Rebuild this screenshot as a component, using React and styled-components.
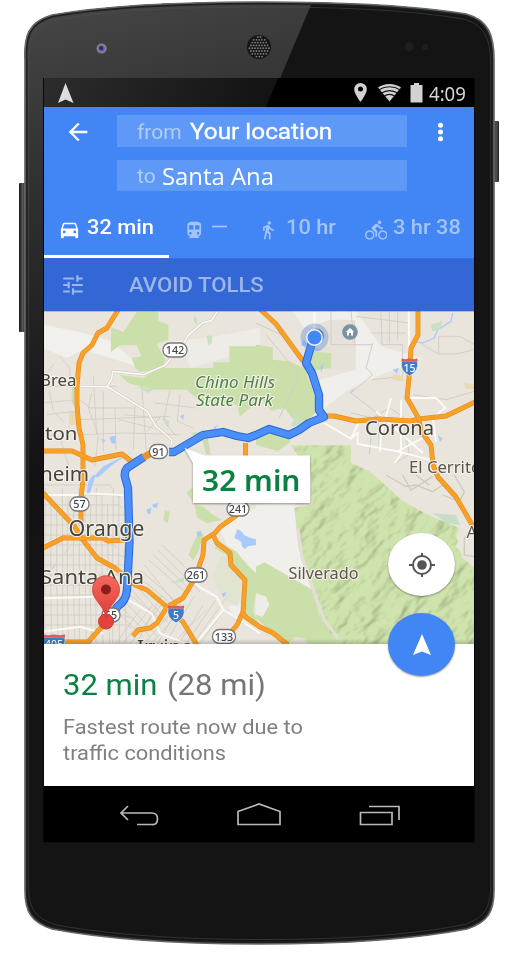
import React from "react";
import styled, { createGlobalStyle } from "styled-components";
import {
  MdArrowBack,
  MdDirectionsBike,
  MdDirectionsCar,
  MdDirectionsTransit,
  MdDirectionsWalk,
  MdTune,
} from "react-icons/md";

const GlobalStyle = createGlobalStyle`
  * { box-sizing: border-box; }
  body { margin: 0; background: #fff; font-family: Roboto, sans-serif; }
  #root svg { display: block; flex: none; }
`;

const Device = styled.main`
  position: relative;
  width: 513px;
  height: 963px;
  padding: 78px 39px 121px 44px;
  overflow: hidden;
`;

const Shell = styled.svg`
  position: absolute;
  inset: 0;
`;

const Screen = styled.div`
  position: relative;
  display: flex;
  flex-direction: column;
  width: 430px;
  height: 764px;
  background: #fff;
  overflow: hidden;
`;

const StatusBar = styled.div`
  display: flex;
  align-items: center;
  flex: none;
  height: 29px;
  padding: 0 8px 0 14px;
  color: #d6d6d6;
  background: linear-gradient(113deg, #2c2c2c 0%, #131313 52.8%, #000 53.1%);
`;

const StatusIcons = styled.div`
  display: flex;
  align-items: center;
  margin-left: auto;
`;

const Clock = styled.span`
  width: 37px;
  margin-left: 6px;
  font: 400 20px/29px "Noto Sans", sans-serif;
  transform: scaleX(0.93);
  transform-origin: left;
  padding-top: 1px;
  white-space: nowrap;
`;

const Header = styled.header`
  display: grid;
  grid-template-columns: 73px 290px 1fr;
  grid-template-rows: 32px 31px;
  row-gap: 13px;
  flex: none;
  height: 95px;
  padding-top: 8px;
  background: #4285f5;
`;

const HeaderButton = styled.button`
  display: flex;
  align-items: center;
  padding: 2px 0 0 ${(p) => p.$inset}px;
  border: 0;
  background: none;
  color: #fff;
`;

const Field = styled.div`
  grid-column: 2;
  display: flex;
  align-items: center;
  padding-left: 20px;
  background: #5f99f7;
`;

const Stretch = styled.span`
  display: inline-block;
  flex: none;
  white-space: nowrap;
  transform: scaleX(${(p) => p.$x || 1});
  transform-origin: left;
`;

const FieldLabel = styled(Stretch)`
  width: ${(p) => p.$w}px;
  color: #b0ccfb;
  font-size: 20px;
  line-height: 31px;
  padding-top: 2px;
`;

const FieldValue = styled(Stretch)`
  color: #fff;
  font: ${(p) => (p.$open ? '400 24px/31px "Open Sans"' : "400 22px/31px Roboto")}, sans-serif;
  padding-top: ${(p) => (p.$open ? 0 : 1)}px;
  -webkit-text-stroke: ${(p) => (p.$open ? 0 : 0.3)}px #fff;
`;

const Tabs = styled.nav`
  display: flex;
  flex: none;
  height: 56px;
  background: #4285f5;
`;

const Tab = styled.div`
  display: flex;
  align-items: flex-start;
  flex: none;
  width: ${(p) => p.$w}px;
  padding: 13px 0 0 ${(p) => p.$inset}px;
  color: ${(p) => (p.$active ? "#fff" : "#a3c3fb")};
  border-bottom: ${(p) => (p.$active ? "3px solid #fff" : "0")};

  svg { margin: ${(p) => p.$iconTop || 0}px ${(p) => p.$gap}px 0 0; }
`;

const TabText = styled(Stretch)`
  font-size: 20px;
  font-weight: 500;
  line-height: 24px;
`;

const Options = styled.div`
  display: flex;
  align-items: center;
  flex: none;
  height: 53px;
  padding-left: 15.5px;
  color: #9cb5ea;
  background: #3367d6;
  box-shadow: inset 0 1px 0 #386dde;

  span { margin: 1px 0 0 43.5px; font-size: 20px; font-weight: 500; }
`;

const MapArea = styled.section`
  flex: none;
  height: 333px;
  background: #e9e5dc;
`;

const FabColumn = styled.div`
  position: absolute;
  top: 455px;
  left: 344px;
  display: grid;
  gap: 17px;
`;

const Fab = styled.button`
  display: grid;
  place-items: center;
  width: 67px;
  height: 63px;
  padding: 0;
  border: 0;
  border-radius: 50%;
  background: ${(p) => p.$bg};
  box-shadow: 0 1px 2px rgba(0, 0, 0, 0.38);
`;

const Summary = styled.section`
  flex: none;
  height: 142px;
  padding: 24px 0 0 19px;
  color: #757575;
  background: #fff;
`;

const Trip = styled.div`
  display: flex;
  height: 34px;
  font-size: 29px;
  line-height: 34px;
`;

const Duration = styled(Stretch)`
  width: 104px;
  color: #0b8043;
`;

const Reason = styled.p`
  margin: 12px 0 0;
  font-size: 20px;
  line-height: 26px;
  color: #808080;
`;

const SystemNav = styled.nav`
  display: flex;
  align-items: flex-start;
  flex: none;
  height: 56px;
  padding: 16px 73.5px 0 74px;
  justify-content: space-between;
  background: #000;
`;

const bodyPath =
  "M25 60C24 36 28 22 52 15C115 4 190 2 260 2C330 2 405 4 466 14C489 20 494 36 494 60V890C494 912 488 922 467 929C405 941 330 944 260 944C190 944 110 940 52 929C31 922 25 912 25 890Z";

const speakerDots = [];
for (let r = 0; r < 8; r += 1) {
  for (let c = 0; c < 8; c += 1) {
    const x = 249.4 + c * 2.8 + (r % 2) * 1.4;
    const y = 37 + r * 2.8;
    if (Math.hypot(x - 259, y - 47) < 10.5) speakerDots.push([x, y]);
  }
}

function DeviceShell() {
  return (
    <Shell width="513" height="963" aria-hidden="true">
      <defs>
        <linearGradient id="gloss" gradientUnits="userSpaceOnUse" x1="60" y1="10" x2="170" y2="430">
          <stop offset="0" stopColor="#454545" />
          <stop offset=".3" stopColor="#343434" />
          <stop offset="1" stopColor="#131313" />
        </linearGradient>
        <linearGradient id="key" x1="0" x2="1">
          <stop offset="0" stopColor="#151515" />
          <stop offset=".5" stopColor="#555" />
          <stop offset="1" stopColor="#222" />
        </linearGradient>
        <clipPath id="body"><path d={bodyPath} /></clipPath>
        <radialGradient id="lens">
          <stop offset="0" stopColor="#343a86" />
          <stop offset=".4" stopColor="#5c608c" />
          <stop offset=".7" stopColor="#8a8a98" />
          <stop offset="1" stopColor="#4a4a4c" />
        </radialGradient>
      </defs>
      <rect x="19" y="183" width="7" height="149" rx="1" fill="url(#key)" />
      <rect x="493" y="121" width="6" height="61" rx="1" fill="url(#key)" />
      <path d={bodyPath} fill="#141414" />
      <path clipPath="url(#body)" d="M20 0H313L170 340L20 560Z" fill="url(#gloss)" />
      <path d={bodyPath} fill="none" stroke="#202122" strokeWidth="5" clipPath="url(#body)" />
      <path d={bodyPath} fill="none" stroke="#65686a" strokeWidth="1.7" />
      <path d={bodyPath} fill="none" stroke="#515151" strokeWidth="1" transform="translate(4 5) scale(.985 .99)" opacity=".5" />
      <circle cx="101.600" cy="48.500" r="5.600" fill="url(#lens)" />
      <circle cx="101" cy="48" r="2" fill="#24277a" />
      <circle cx="259" cy="47" r="12" fill="#151515" />
      {speakerDots.map(([x, y]) => (
        <circle key={`${x}-${y}`} cx={x} cy={y} r=".9" fill="#808080" />
      ))}
      <circle cx="409" cy="47" r="4.500" fill="#221e1e" />
      <circle cx="425" cy="47" r="3" fill="#1f1d1d" />
      <path d="M43.500 78V842H474.500V78" fill="none" stroke="#080808" />
    </Shell>
  );
}

const cityBlocks = [];
for (let i = 0; i < 15; i += 1) {
  const x = 16 + i * 17;
  cityBlocks.push(`M${x} ${40 + (i % 3) * 24}l${(i % 4) - 2} 235l${(i % 3) * 3} 230`);
  cityBlocks.push(`M10 ${30 + i * 30}h${200 + (i % 5) * 14}l${i % 2 ? 18 : 5} 8`);
}
for (let i = 0; i < 13; i += 1) {
  cityBlocks.push(`M${225 + i * 21} ${510}l${75 + (i % 3) * 16} -${105 + (i % 4) * 14}`);
  cityBlocks.push(`M${210 + i * 13} ${390 - i * 15}l${100 + (i % 4) * 9} ${96 + (i % 3) * 15}`);
}

function Road({ d }) {
  return (
    <>
      <path d={d} fill="none" stroke="#e08c1f" strokeWidth="4.900" strokeLinejoin="round" />
      <path d={d} fill="none" stroke="#f8a027" strokeWidth="3.800" strokeLinejoin="round" />
    </>
  );
}

function Shield({ x, y, w = 20, children }) {
  return (
    <g>
      <rect x={x - w / 2} y={y - 7} width={w} height="14" rx="6.800" fill="#fff" stroke="#777" strokeWidth="1.3" />
      <text x={x} y={y + 4} fontSize="10.800" fontWeight="500" textAnchor="middle" fill="#444">{children}</text>
    </g>
  );
}

function Interstate({ x, y, w = 16, children }) {
  return (
    <g transform={`translate(${x} ${y})`}>
      <path d={`M${-w / 2} -6Q${-w / 2 - 2} 4 0 9Q${w / 2 + 2} 4 ${w / 2} -6Z`} fill="#3f7cc4" stroke="#fff" strokeWidth=".7" />
      <path d={`M${-w / 2} -8.500L${-w / 4} -7.800L0 -8.500L${w / 4} -7.800L${w / 2} -8.500V-5.500H${-w / 2}Z`} fill="#de5d58" />
      <text x="0" y="5" fontSize="10.500" fontWeight="500" textAnchor="middle" fill="#fff">{children}</text>
    </g>
  );
}

function Place({ x, y, w, size, color = "#46443d", children, ...rest }) {
  return (
    <text
      x={x} y={y} fontSize={size} fill={color} textLength={w} lengthAdjust="spacingAndGlyphs"
      stroke="#f4f1eb" strokeWidth="2.2" strokeLinejoin="round" paintOrder="stroke"
      fontFamily="'Noto Sans', sans-serif" {...rest}
    >
      {children}
    </text>
  );
}

const bigHills =
  "M105 412H285V465L340 490L370 515L375 520L435 575L505 615L525 625L610 660L600 680L620 750L655 780V1010H245L215 960L195 930L170 842L128 720L115 600L165 590V500L130 450Z";

const highways = [
  "M118 310L107 328L98 333L92 345L83 353L79 363L77 386L77 405L79 428L83 445L83 478L81 500V524",
  "M44 451H72L92 460L122 454L132 462L150 454",
  "M43 493L75 527L83 540L97 558L115 568L135 585L147 590L167 607L183 622L197 645",
  "M43 548L63 538H103L108 541L124 540",
  "M167 607L183 598L195 578L203 555L204 540L215 533L220 527L237 515",
  "M213 535L217 543L230 553L231 565L245 580L243 612L237 625L226 638",
  "M242 613L247 618L260 627L273 633L288 645",
  "M167 607L157 623L150 628L138 630L133 636",
  "M64 642H88L106 622",
  "M260 309L276 324L303 361",
  "M323 416H334L356 421L379 419L411 421L419 419L446 416L475 402",
  "M418 310V335L411 348L409 378L407 398L419 419L421 431L431 445L433 465L438 477L456 497L474 528",
  "M245.500 443V458",
];

const routeSouth = "M144 457L127 468Q124 472 125 477L128 488L129.500 542L127 590Q126 601 118 606L107 621";
const routeNorth = "M169 452H174L203 435L223 432L237 436L248 438L256 435L269 429L289 435L299 430L309 423L324 417L319 410V395L312 373L306 363L313 339";

function RouteMap() {
  return (
    <svg width="430" height="333" viewBox="44 311 430 333" fontFamily="'Noto Sans', sans-serif">
      <defs>
        <filter id="relief" x="0" y="0" width="100%" height="100%" colorInterpolationFilters="sRGB">
          <feTurbulence type="fractalNoise" baseFrequency=".04 .07" numOctaves="3" seed="8" />
          <feDiffuseLighting surfaceScale="4" lightingColor="#fcfff0" diffuseConstant="1.18">
            <feDistantLight azimuth="225" elevation="58" />
          </feDiffuseLighting>
        </filter>
        <clipPath id="hills">
          <path d={bigHills} transform="translate(256 308) scale(.33333)" />
        </clipPath>
        <linearGradient id="pin" x1="0" y1="0" x2="0" y2="1">
          <stop offset="0" stopColor="#f36a60" /><stop offset="1" stopColor="#df3b34" />
        </linearGradient>
        <filter id="soft" x="-10%" y="-20%" width="120%" height="150%">
          <feDropShadow dx="0" dy="1" stdDeviation="1" floodOpacity=".4" />
        </filter>
        <linearGradient id="edge" x1="0" y1="0" x2="0" y2="1">
          <stop offset="0" stopColor="#000" stopOpacity="0" /><stop offset="1" stopColor="#000" stopOpacity=".18" />
        </linearGradient>
      </defs>
      <rect x="44" y="311" width="430" height="333" fill="#e9e5dc" />

      <g transform="translate(40 308) scale(.33333)">
        <path d="M10 50L130 75L215 100L270 150L340 195L260 165L130 125L80 150L10 120Z" fill="#f1f0ec" />
        <path d="M380 100L500 90L660 60V120L570 145L450 180L430 120Z" fill="#eeece6" />
        <path d="M214 58L250 72L292 10H355V38L385 50V95L350 108L365 135L376 157L365 185L300 192L286 180L275 150L305 145L290 112L240 112L212 132Z" fill="#cadfaa" />
        <path d="M238 200L310 210L350 180H520V163H568V115H660V245L630 300L600 325L590 290L480 280L440 245H340L265 225Z" fill="#cadfaa" />
        <path d="M95 235L106 240L103 293L95 285ZM450 375L500 370L512 440L498 438L488 400Z" fill="#c8ddb0" />
        <path d="M87 310H112V350H87Z" fill="#e9dab1" />
        <path d="M462 22L472 35L470 50L462 40ZM500 85L516 82V105L505 112ZM370 330L388 340L385 360ZM290 235L340 245L355 235L325 255Z" fill="#c8dfc4" />
        <path d="M208 388L228 382V405L215 407ZM184 392L196 396L190 408ZM420 325L432 318L430 335ZM160 508L190 475L260 440L280 430L220 468L175 508ZM520 360L535 348L525 365Z" fill="#a9cbfb" />
        <path d="M60 145L90 180L88 235M10 235H230M10 285L110 275M120 275L150 300L280 300M155 255L145 300L175 380L165 475M190 250V430M120 335L390 325M160 205L170 380M225 300L228 425M285 290L280 425M305 230L320 440M390 245L370 340L410 385M125 380L260 375L420 380M420 260L412 340L460 360M20 320L105 310M10 375L60 390L85 470M345 285L470 300M250 320L360 330L320 370M235 335L340 360M40 170L10 210M28 250L40 310L70 340" fill="none" stroke="#d1ccc1" strokeWidth="2.500" />
        <path d="M532 10L514 38L488 44L445 82L430 108L375 172L310 200L218 190L215 212L202 236L120 235M202 236L322 310L348 355L395 395V410" fill="none" stroke="#cbc7bf" strokeWidth="8" />
        <path d="M532 10L514 38L488 44L445 82L430 108L375 172L310 200L218 190L215 212L202 236L120 235M202 236L322 310L348 355L395 395V410" fill="none" stroke="#fbfaf7" strokeWidth="5" />
      </g>

      <g transform="translate(256 308) scale(.33333)">
        <path d="M110 10H300L375 115L500 150L350 210L285 240L205 300L190 215L300 185V100L225 95L145 60Z" fill="#f0efeb" />
        <path d="M145 60L225 35H298V185H200Z" fill="#e7e2d9" />
        <path d="M0 110L50 118V155L100 160L145 180L165 230L190 305L150 340L125 350L85 300L45 308L0 250Z" fill="#cadfaa" />
        <path d="M150 130L225 135V180L170 188ZM0 385L40 362L110 378L100 405L65 430L0 410Z" fill="#cadfaa" />
        <path d="M30 80L130 200L70 330M0 45L75 80M225 10V110H350M285 10L290 60M295 45V105M375 10L378 110H440V205L350 215M350 105L330 180L350 200L285 255L370 320M400 10V105M300 25L460 45M350 75H450M425 10V95M500 110L548 138H600L655 125M548 138V85L610 85L655 110M285 315L350 330L400 300L440 325L460 440L415 465M345 385L340 440M470 260L570 275L655 250M365 315L370 420" fill="none" stroke="#d3cec4" strokeWidth="3" />
        <path d="M175 10V70M458 10L460 160M405 270L375 380L372 430M435 275V440L415 465M455 270H540L568 300L530 330L540 400M205 345L285 392L305 375V408L425 430L500 390M310 340L285 392M425 430L540 460M360 310L500 435" fill="none" stroke="#fdfcf9" strokeWidth="5.500" />
        <path d="M590 15L585 40L545 65L535 90L500 105L475 100" fill="none" stroke="#a9cbfb" strokeWidth="4" />
        <path d="M143 92L155 110L135 115ZM193 175L204 165L195 195ZM278 258L300 235L290 250ZM410 185L428 180L423 198ZM545 380L560 392L552 402ZM180 120L200 128L182 127Z" fill="#a9cbfb" />
        <path d="M410 198L440 205V220L410 216ZM625 225L655 230V245L628 242Z" fill="#e9dab1" />
        <path d="M525 50L560 38L550 65L528 70ZM105 355L120 318L132 320L125 355Z" fill="#c8dfca" />
      </g>

      <g transform="translate(40 475) scale(.33333)">
        <path d={cityBlocks.join("")} fill="none" stroke="#d2cdc3" strokeWidth="2.600" />
        <path d="M10 60H115M130 55L250 60M10 370L160 365M10 470L120 455L190 475M265 375L335 415L360 475L445 508M465 325L485 340L530 365L550 405L465 508M550 405L585 425L660 475" fill="none" stroke="#fbf9f5" strokeWidth="6" />
        <path d="M540 165L590 120L650 100L880 90V370L690 290L650 300L620 260L570 230Z" fill="#f0efeb" />
        <path d="M375 105L390 110L382 145L370 135ZM465 90L490 95L520 120L545 135L500 145L470 125ZM440 55L458 35V80Z" fill="#cadfaa" />
        <path d="M480 165L490 180L475 230L460 255L445 240L460 205ZM530 195L590 230L625 275L655 300L640 410L660 460L620 435L605 405L612 320L565 275L560 240L525 220Z" fill="#cadfaa" />
        <path d="M565 395L605 385L608 420L580 425Z" fill="#f0efeb" />
        <path d="M545 240L570 250L605 320L595 395L560 380L515 310Z" fill="#dfe3cd" opacity=".65" />
        <path d="M145 20L160 0H167L150 55H140ZM320 103L335 98L330 118L322 115ZM338 88L355 84L350 99L338 96ZM583 188L592 162L606 170L612 180L630 188L660 196L655 210L625 213L615 222L606 215L604 200ZM545 355L560 352L550 368ZM470 170H484V184H472ZM30 290L48 262L43 275Z" fill="#a9cbfb" />
        <path d="M70 240L90 210L82 230ZM390 325L435 305L430 320Z" fill="#c8dfca" />
      </g>

      <g transform="translate(256 475) scale(.33333)">
        <path d="M0 90L115 80L125 190L160 320L100 300L70 285L20 265L0 270Z" fill="#f0efeb" />
        <path d="M0 275L25 262L75 290L170 345L190 420L245 485L240 508H90L0 430Z" fill="#cadfaa" />
        <path d="M0 355L30 365L40 390L20 425L0 420Z" fill="#eeece6" />
        <path d="M115 485L145 490L155 508H95Z" fill="#e5e0d3" />
      </g>
      <path d={bigHills} transform="translate(256 308) scale(.33333)" fill="#cfe3ae" />
      <g clipPath="url(#hills)" opacity=".36" style={{ mixBlendMode: "multiply" }}>
        <g transform="rotate(-38 380 540)">
          <rect x="200" y="340" width="400" height="400" filter="url(#relief)" />
        </g>
      </g>
      <g transform="translate(256 475) scale(.33333)">
        <path d="M125 160L138 245L165 325L205 435L245 488" fill="none" stroke="#e4ded4" strokeWidth="10" />
        <path d="M360 0L440 70L510 110L600 145L615 175L600 215L655 275V0Z" fill="#e9e5dc" />
        <path d="M530 115L600 120L612 150L575 145Z" fill="#c6ddc9" />
        <path d="M390 0L450 35L480 30L530 50L560 30M440 0L465 45L530 5M480 0L520 30M560 60L610 80L625 50L595 0M655 150L625 190V240L655 245" fill="none" stroke="#cfcabf" strokeWidth="4" />
      </g>

      {highways.map((d) => <Road key={d} d={d} />)}

      {[routeSouth, routeNorth].map((d) => (
        <g key={d} fill="none" strokeLinejoin="round">
          <path d={d} stroke="#2c68cf" strokeWidth="8.300" />
          <path d={d} stroke="#4a8ffb" strokeWidth="6.300" />
        </g>
      ))}
      <path d="M143.500 457.500L152 452.500" fill="none" stroke="#e5932a" strokeWidth="7" />

      <Shield x={175} y={350} w={24}>142</Shield>
      <Shield x={158.500} y={451.500} w={18}>91</Shield>
      <Shield x={79.500} y={504} w={19}>57</Shield>
      <Shield x={238} y={509} w={22}>241</Shield>
      <Shield x={196} y={575} w={22}>261</Shield>
      <Shield x={224} y={636.500} w={23}>133</Shield>
      <Shield x={111} y={615} w={18}>55</Shield>
      <Interstate x={409.500} y={367}>15</Interstate>
      <Interstate x={176} y={614}>5</Interstate>
      <Interstate x={54} y={643} w={22}>405</Interstate>

      <Place x={40} y={385.500} w={36.500} size={16.500}>Brea</Place>
      <Place x={45} y={440} w={32.500} size={18.500}>ton</Place>
      <Place x={40} y={481} w={49} size={19}>heim</Place>
      <Place x={68.500} y={535.500} w={76} size={21}>Orange</Place>
      <Place x={40} y={583.500} w={104} size={20}>Santa Ana</Place>
      <Place x={365} y={434.500} w={69} size={20.500}>Corona</Place>
      <Place x={409} y={473} w={72} size={15.500} color="#5d5548">El Cerrito</Place>
      <Place x={288.500} y={579} w={70} size={16} color="#5d5548">Silverado</Place>
      <Place x={466.500} y={538} w={10.500} size={15.500} color="#5d5548">A</Place>
      <Place x={137} y={653.500} w={56} size={19.500}>Irvine</Place>
      <Place x={195} y={388} w={80} size={16} color="#4d8141" fontStyle="italic">Chino Hills</Place>
      <Place x={196} y={406} w={77} size={16} color="#4d8141" fontStyle="italic">State Park</Place>

      <circle cx="314.500" cy="337.500" r="14" fill="#5488dc" opacity=".36" />
      <circle cx="316.500" cy="336" r="7.500" fill="#5f6670" opacity=".8" />
      <circle cx="314.500" cy="337.500" r="7.700" fill="#4387f4" stroke="#eff5ff" strokeWidth="1.400" />
      <circle cx="350" cy="332" r="7.800" fill="#7994a0" />
      <path d="M350 328L345.800 332H347V335.500H349V333H351V335.500H353V332H354.200Z" fill="#fff" />

      <circle cx="106" cy="621.500" r="7.500" fill="#e6423d" stroke="#c9362f" />
      <path d="M106 618C104 605 92.500 600 92.500 590C92.500 571 119.500 571 119.500 590C119.500 600 108 605 106 618Z" fill="url(#pin)" stroke="#c93a34" strokeWidth=".7" />
      <circle cx="106" cy="589.500" r="5" fill="#8c1d19" />

      <path filter="url(#soft)" d="M184.500 448L205 455.500H310V503H193V463Z" fill="#fff" />
      <text x="202" y="490.500" fontSize="28.500" fontWeight="600" fill="#0b8043" textLength="98.500" lengthAdjust="spacingAndGlyphs">32 min</text>
      <rect x="44" y="639" width="430" height="5" fill="url(#edge)" />
      <rect x="44" y="311" width="430" height="1" fill="#000" opacity=".18" />
    </svg>
  );
}

export default function App() {
  return (
    <>
      <GlobalStyle />
      <Device>
        <DeviceShell />
        <Screen>
          <StatusBar>
            <svg width="16" height="20" viewBox="0 0 16 20"><path d="M7.500 0L15.500 20L7.500 16.500L0 20Z" fill="#ddd" /></svg>
            <StatusIcons>
              <svg width="13" height="19" viewBox="0 0 13 19"><path fillRule="evenodd" fill="#d2d2d2" d="M6.500 0A6.300 6.300 0 0 0 .2 6.300C.2 11 6.500 19 6.500 19S12.800 11 12.800 6.300A6.300 6.300 0 0 0 6.500 0ZM6.500 3.500A2.500 2.500 0 1 1 6.500 8.500A2.500 2.500 0 0 1 6.500 3.500Z" /></svg>
              <svg width="43" height="19" viewBox="0 0 43 19">
                <path d="M11 4.500Q16 1 22.500 1Q29 1 34 4.500L22.500 18.500Z" fill="#d2d2d2" />
                <path d="M11.500 7Q22.500 .5 33.500 7M14 10.200Q22.500 5 31 10.200M17 13.200Q22.500 9.600 28 13.200" fill="none" stroke="#111" strokeWidth="1.100" />
              </svg>
              <svg width="13" height="20" viewBox="0 0 13 20"><path d="M4 0H9V2H12.500V19.500H.5V2H4Z" fill="#d2d2d2" /></svg>
              <Clock>4:09</Clock>
            </StatusIcons>
          </StatusBar>

          <Header>
            <HeaderButton $inset={19.500} aria-label="Back">
              <MdArrowBack size={28} />
            </HeaderButton>
            <Field>
              <FieldLabel $w={53} $x={1.05}>from</FieldLabel>
              <FieldValue $x={1.105}>Your location</FieldValue>
            </Field>
            <HeaderButton $inset={30} aria-label="More">
              <svg width="7" height="20" viewBox="0 0 7 20" fill="#fff">
                <circle cx="3.500" cy="3.300" r="2.500" /><circle cx="3.500" cy="10" r="2.500" /><circle cx="3.500" cy="16.700" r="2.500" />
              </svg>
            </HeaderButton>
            <Field>
              <FieldLabel $w={25} $x={1.05}>to</FieldLabel>
              <FieldValue $open $x={0.995}>Santa Ana</FieldValue>
            </Field>
          </Header>

          <Tabs>
            <Tab $active $w={125} $inset={13.5} $gap={6} $iconTop={3}>
              <MdDirectionsCar size={23} />
              <TabText $x={1.09}>32 min</TabText>
            </Tab>
            <Tab $w={82} $inset={14.5} $gap={8} $iconTop={5}>
              <MdDirectionsTransit size={20.5} />
              <svg width="15" height="20" viewBox="0 0 15 20"><path d="M0 6.500H15" stroke="currentColor" strokeWidth="1.800" /></svg>
            </Tab>
            <Tab $w={106} $inset={6.500} $gap={8} $iconTop={5}>
              <MdDirectionsWalk size={20} />
              <TabText $x={1.09}>10 hr</TabText>
            </Tab>
            <Tab $w={117} $inset={7.5} $gap={6} $iconTop={4}>
              <MdDirectionsBike size={22.5} />
              <TabText $x={1.09}>3 hr 38</TabText>
            </Tab>
          </Tabs>

          <Options>
            <MdTune size={26} />
            <Stretch $x={1.108}>AVOID TOLLS</Stretch>
          </Options>

          <MapArea><RouteMap /></MapArea>

          <Summary>
            <Trip>
              <Duration $x={1.07}>32 min</Duration>
              <Stretch $x={1.07}>(28 mi)</Stretch>
            </Trip>
            <Reason>
              <Stretch $x={1.09}>Fastest route now due to<br />traffic conditions</Stretch>
            </Reason>
          </Summary>

          <SystemNav>
            <svg width="42" height="26" viewBox="0 0 42 26" fill="none" stroke="#b9b9b9" strokeWidth="1.700">
              <path d="M10 4L3 11L10 18M3 11H34Q39.500 11 39.500 17T34 22.500H19" />
            </svg>
            <svg width="46" height="26" viewBox="0 0 46 26" fill="none" stroke="#b9b9b9" strokeWidth="1.700">
              <path d="M2 9.500L23 2L44 9.500V22.500H2Z" />
            </svg>
            <svg width="42" height="26" viewBox="0 0 42 26" fill="none" stroke="#b9b9b9" strokeWidth="1.700">
              <path d="M1.500 10.500H33V22.500H1.500ZM10 4.500H40V18" />
            </svg>
          </SystemNav>

          <FabColumn>
            <Fab $bg="#fff" aria-label="My location">
              <svg width="28" height="26" viewBox="0 0 28 26" fill="none" stroke="#555" strokeWidth="2">
                <circle cx="14" cy="13" r="9" /><path d="M14 1V5M14 21V25M1 13H5M23 13H27" />
                <circle cx="14" cy="13" r="4.800" fill="#555" stroke="none" />
              </svg>
            </Fab>
            <Fab $bg="#4285f5" aria-label="Start navigation">
              <svg width="20" height="22" viewBox="0 0 20 22"><path d="M10 0L19 21L10 17.500L1 21Z" fill="#fff" /></svg>
            </Fab>
          </FabColumn>
        </Screen>
      </Device>
    </>
  );
}
